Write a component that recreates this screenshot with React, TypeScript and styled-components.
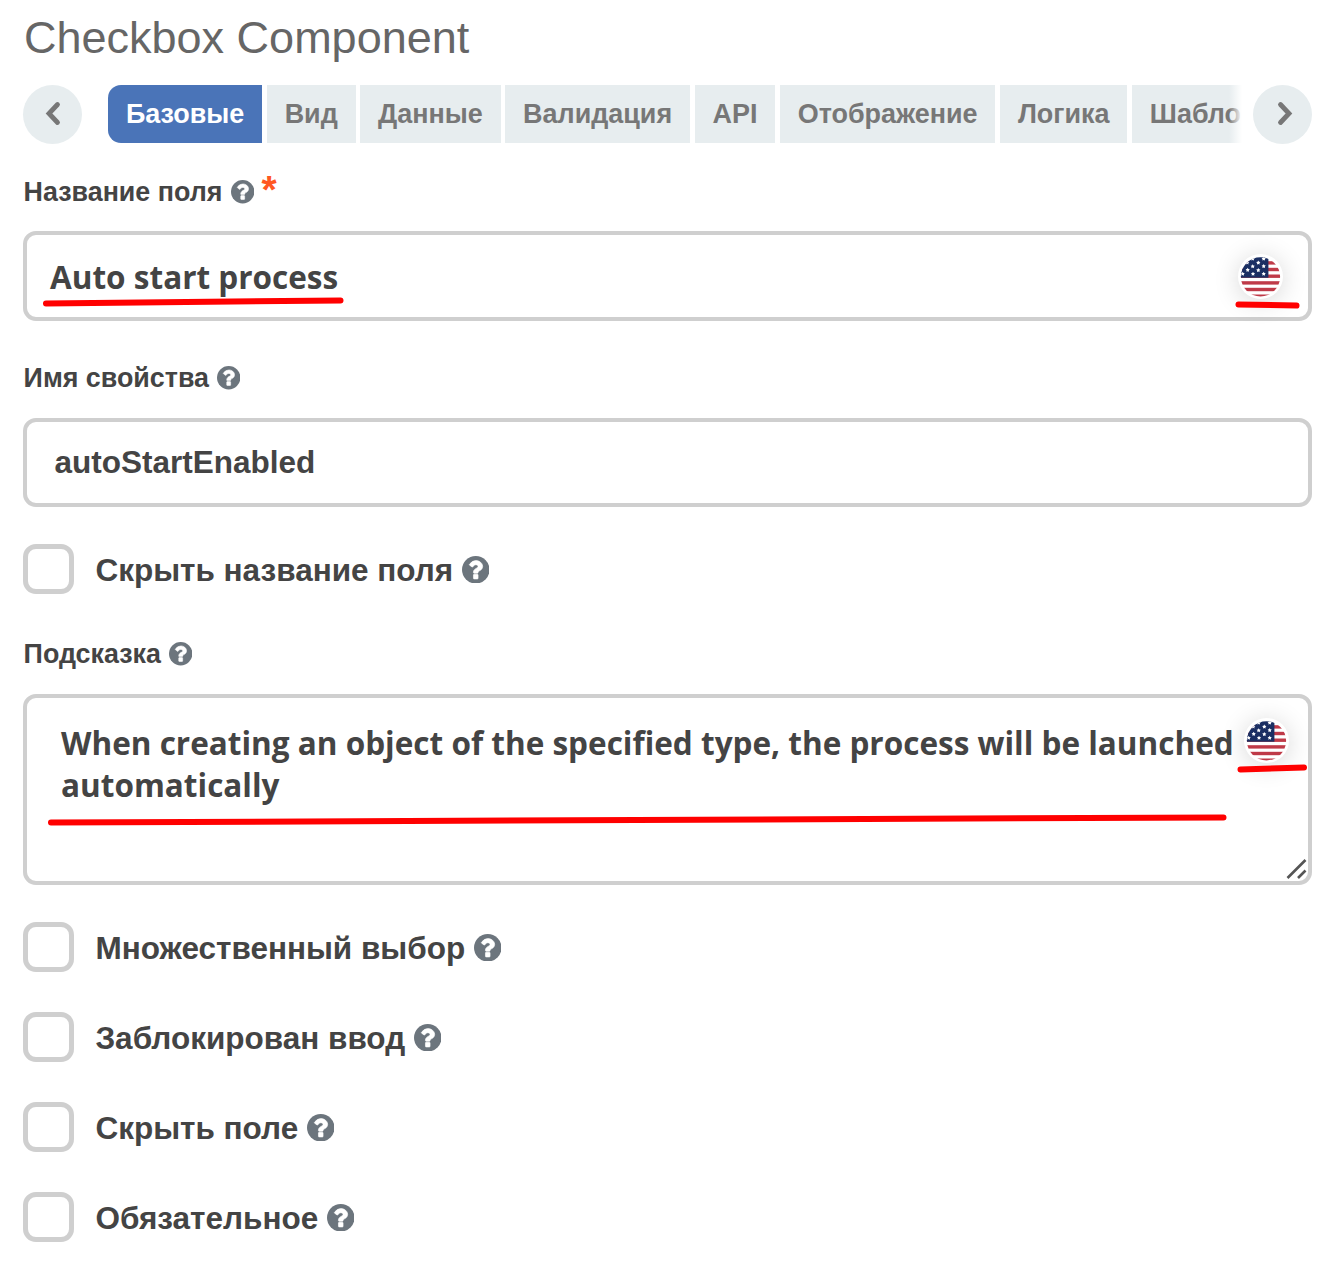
import React from 'react';
import styled, { createGlobalStyle } from 'styled-components';

const sans = '"Liberation Sans", Arial, sans-serif';
const openSans = '"Open Sans", "Noto Sans", sans-serif';

const GlobalStyle = createGlobalStyle`
  *, *::before, *::after { box-sizing: border-box; }
  body {
    margin: 0;
    background: #fff;
    color: #444;
    font-family: ${sans};
  }
`;

const Page = styled.main`
  width: 1343px;
  height: 1270px;
  padding: 8px 31px 0 23px;
  overflow: hidden;
`;

const Title = styled.h1`
  margin: 0 0 17px;
  padding-left: 1px;
  color: #666;
  font-size: 45px;
  font-weight: 400;
  line-height: 60px;
`;

const TabBar = styled.nav`
  display: flex;
  align-items: flex-start;
  height: 59px;
`;

const ScrollButton = styled.button`
  display: flex;
  flex: none;
  align-items: center;
  justify-content: center;
  width: 59px;
  height: 59px;
  padding: 0;
  border: 0;
  border-radius: 50%;
  background: #e7edef;
`;

const TabViewport = styled.div`
  position: relative;
  flex: 1;
  min-width: 0;
  height: 58px;
  margin: 0 11px 0 26px;
  overflow: hidden;

  &::after {
    content: '';
    position: absolute;
    top: 0;
    right: 0;
    width: 13px;
    height: 100%;
    background: linear-gradient(to right, rgba(255, 255, 255, 0), #fff);
  }
`;

const TabList = styled.div`
  display: flex;
  gap: 4.55px;
  width: max-content;
`;

const Tab = styled.button<{ $active?: boolean }>`
  flex: none;
  height: 58px;
  padding: 0 17.9px;
  border: 0;
  border-radius: ${(p) => (p.$active ? '13px 0 0 13px' : '0')};
  background: ${(p) => (p.$active ? '#4a74b8' : '#e7edef')};
  color: ${(p) => (p.$active ? '#fff' : '#777')};
  font: 700 26.95px / 58px ${sans};
`;

const Field = styled.section<{ $gap: number }>`
  display: flex;
  flex-direction: column;
  margin-top: ${(p) => p.$gap}px;
`;

const FieldLabel = styled.div<{ $space: number }>`
  display: flex;
  align-items: center;
  height: 40px;
  margin-bottom: ${(p) => p.$space}px;
  padding-left: 0.6px;
  font-size: 26.85px;
  font-weight: 700;
  line-height: 40px;
`;

const HelpIcon = styled.svg<{ $size: number; $gap: number; $drop: number }>`
  flex: none;
  width: ${(p) => p.$size}px;
  height: ${(p) => p.$size}px;
  margin: ${(p) => p.$drop}px 0 0 ${(p) => p.$gap}px;

  circle { fill: #6c757d; }
  path { fill: #fff; stroke: #fff; stroke-width: 36; }
`;

const Required = styled.span`
  height: 40px;
  margin-left: 7.5px;
  color: #ff5722;
  font-size: 39px;
  line-height: 36px;
`;

const InputBox = styled.div<{ $height: number }>`
  position: relative;
  display: flex;
  align-items: center;
  height: ${(p) => p.$height}px;
  border: 4px solid #cfcfcf;
  border-radius: 13px;
`;

const InputText = styled.span<{ $family: string; $indent: number; $drop?: number; $lift?: number }>`
  padding: ${(p) => p.$drop ?? 0}px 0 ${(p) => p.$lift ?? 0}px ${(p) => p.$indent}px;
  font: 700 31.5px / 42px ${(p) => p.$family};
`;

const TextArea = styled(InputBox)`
  align-items: flex-start;
  padding: 24px 0 0 34px;
`;

const AreaText = styled.p`
  width: 1180px;
  margin: 0;
  font: 700 31.5px / 42px ${openSans};
`;

const FlagBadge = styled.span<{ $top: number; $right: number }>`
  position: absolute;
  top: ${(p) => p.$top}px;
  right: ${(p) => p.$right}px;
  width: 45px;
  height: 45px;
  border-radius: 50%;
  background: #fff;
  box-shadow: 0 3px 26px rgba(0, 0, 0, 0.16);

  svg { display: block; }
`;

const Marker = styled.svg`
  position: absolute;
  top: -4px;
  left: -4px;
  overflow: visible;
  pointer-events: none;
  stroke: #f00;
  stroke-width: 6;
  stroke-linecap: round;
`;

const ResizeGrip = styled.svg`
  position: absolute;
  right: 0;
  bottom: 1px;
`;

const CheckList = styled.div<{ $gap: number }>`
  display: flex;
  flex-direction: column;
  gap: 40px;
  margin-top: ${(p) => p.$gap}px;
`;

const CheckRow = styled.label`
  display: flex;
  align-items: center;
  height: 50px;
`;

const CheckMark = styled.span`
  flex: none;
  width: 51px;
  height: 50px;
  margin-right: 21.4px;
  border: 5px solid #cfcfcf;
  border-radius: 13px;
`;

const CheckText = styled.span`
  padding-top: 2px;
  font-size: 31.5px;
  font-weight: 700;
  line-height: 42px;
`;

function Help({ size, gap, drop = 0 }: { size: number; gap: number; drop?: number }) {
  return (
    <HelpIcon $size={size} $gap={gap} $drop={drop} viewBox="128 128 1536 1536">
      <circle cx="896" cy="896" r="768" />
      <path d="M1024 1376v-192q0-14-9-23t-23-9h-192q-14 0-23 9t-9 23v192q0 14 9 23t23 9h192q14 0 23-9t9-23zm256-672q0-88-55.5-163t-138.5-116-170-41q-243 0-371 213-15 24 8 42l132 100q7 6 19 6 16 0 25-12 53-68 86-92 34-24 86-24 48 0 85.5 26t37.5 59q0 38-20 61t-68 45q-63 28-115.5 86.5t-52.5 125.5v36q0 14 9 23t23 9h192q14 0 23-9t9-23q0-19 21.5-49.5t54.5-49.5q32-18 49-28.5t46-35 44.5-48 28-60.5 12.5-81z" />
    </HelpIcon>
  );
}

function Chevron({ direction }: { direction: 'left' | 'right' }) {
  const points = direction === 'right' ? '27.5,19.5 36,28.5 27.5,37.5' : '34.5,19.5 26,28.5 34.5,37.5';
  return (
    <svg width="59" height="59" viewBox="0 0 59 59" fill="none">
      <polyline points={points} stroke="#777" strokeWidth="4.8" strokeLinecap="round" />
    </svg>
  );
}

const stripes = [7.2, 13.8, 20.5, 27.2, 33.8, 40.5];
const stars = [
  [14.7, 4.8], [25.7, 4.8], [9.2, 8.6], [20.3, 8.8], [14.7, 12.4], [25.7, 12.2],
  [9.7, 16], [20.3, 16.2], [4.7, 19.9], [15, 19.9], [25.7, 19.9],
];
const starPoints = Array.from({ length: 10 }, (_, i) => {
  const radius = i % 2 ? 1.2 : 2.2;
  const angle = (i * Math.PI) / 5 - Math.PI / 2;
  return `${(radius * Math.cos(angle)).toFixed(2)},${(radius * Math.sin(angle)).toFixed(2)}`;
}).join(' ');

function UsFlag({ id, top, right }: { id: string; top: number; right: number }) {
  return (
    <FlagBadge $top={top} $right={right}>
      <svg width="45" height="45" viewBox="0 0 45 45">
        <clipPath id={id}>
          <circle cx="22.5" cy="22.8" r="19.6" />
        </clipPath>
        <g clipPath={`url(#${id})`}>
          {stripes.map((y) => (
            <rect key={y} x="0" y={y} width="45" height="3.4" fill="#bf3a48" />
          ))}
          <rect x="0" y="0" width="30.4" height="23.7" fill="#1b2f63" />
          {stars.map(([x, y]) => (
            <polygon key={`${x}-${y}`} points={starPoints} transform={`translate(${x} ${y})`} fill="#fff" />
          ))}
        </g>
      </svg>
    </FlagBadge>
  );
}

const tabs = ['Базовые', 'Вид', 'Данные', 'Валидация', 'API', 'Отображение', 'Логика', 'Шаблон'];
const options = ['Множественный выбор', 'Заблокирован ввод', 'Скрыть поле', 'Обязательное'];

function CheckOption({ text }: { text: string }) {
  return (
    <CheckRow>
      <CheckMark />
      <CheckText>{text}</CheckText>
      <Help size={27.5} gap={8.6} drop={1.4} />
    </CheckRow>
  );
}

export default function App() {
  return (
    <>
      <GlobalStyle />
      <Page>
        <Title>Checkbox Component</Title>
        <TabBar>
          <ScrollButton><Chevron direction="left" /></ScrollButton>
          <TabViewport>
            <TabList>
              {tabs.map((tab, i) => (
                <Tab key={tab} $active={i === 0}>{tab}</Tab>
              ))}
            </TabList>
          </TabViewport>
          <ScrollButton><Chevron direction="right" /></ScrollButton>
        </TabBar>

        <Field $gap={28}>
          <FieldLabel $space={19}>
            Название поля
            <Help size={23.4} gap={8.2} />
            <Required>*</Required>
          </FieldLabel>
          <InputBox $height={90}>
            <InputText $family={openSans} $indent={23} $drop={2}>Auto start process</InputText>
            <UsFlag id="flag-label" top={18.5} right={25} />
            <Marker width="1289" height="90">
              <line x1="23" y1="72.4" x2="317.5" y2="69.4" />
              <line x1="1215.5" y1="73.4" x2="1273.5" y2="74.6" />
            </Marker>
          </InputBox>
        </Field>

        <Field $gap={37}>
          <FieldLabel $space={20}>
            Имя свойства
            <Help size={23.4} gap={8} />
          </FieldLabel>
          <InputBox $height={89}>
            <InputText $family={sans} $indent={27.4} $lift={2}>autoStartEnabled</InputText>
          </InputBox>
        </Field>

        <CheckList $gap={37}>
          <CheckOption text="Скрыть название поля" />
        </CheckList>

        <Field $gap={40}>
          <FieldLabel $space={20}>
            Подсказка
            <Help size={23.4} gap={8} />
          </FieldLabel>
          <TextArea $height={191}>
            <AreaText>
              When creating an object of the specified type, the process will be launched automatically
            </AreaText>
            <UsFlag id="flag-hint" top={20} right={19} />
            <Marker width="1289" height="191">
              <line x1="1217.5" y1="75.4" x2="1281" y2="73.4" />
              <line x1="28" y1="128.6" x2="1200.5" y2="123.4" />
            </Marker>
            <ResizeGrip width="22" height="22" viewBox="0 0 22 22">
              <path d="M1.5 20 19.5 2M12 20 19.5 12.5" stroke="#555" strokeWidth="2.6" />
            </ResizeGrip>
          </TextArea>
        </Field>

        <CheckList $gap={37}>
          {options.map((text) => (
            <CheckOption key={text} text={text} />
          ))}
        </CheckList>
      </Page>
    </>
  );
}
